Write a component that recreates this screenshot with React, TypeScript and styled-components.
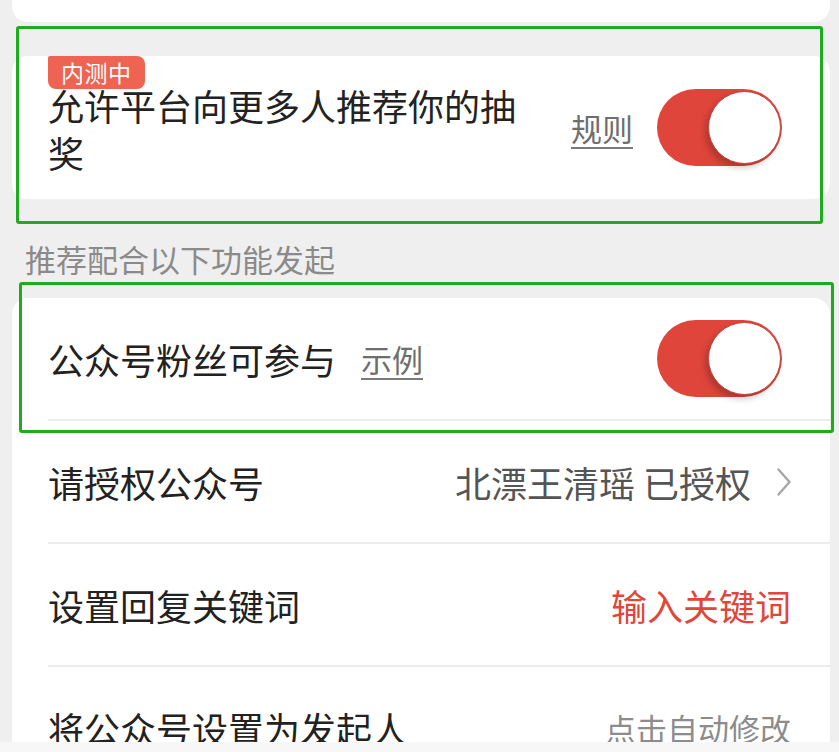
import React from "react";
import styled, { createGlobalStyle } from "styled-components";

const GlobalStyle = createGlobalStyle`
  html, body {
    margin: 0;
    padding: 0;
    background: #efefef;
    overflow: hidden;
  }
  body {
    font-family: "Noto Sans CJK SC", "Noto Sans", sans-serif;
  }
`;

type Row = {
  label: string;
  value?: string;
  tone?: "normal" | "accent" | "muted";
  arrow?: boolean;
};

const rows: Row[] = [
  { label: "请授权公众号", value: "北漂王清瑶 已授权", tone: "normal", arrow: true },
  { label: "设置回复关键词", value: "输入关键词", tone: "accent" },
  { label: "将公众号设置为发起人", value: "点击自动修改", tone: "muted" },
];

export default function App() {
  return (
    <>
      <GlobalStyle />
      <Page>
        <TopCard />
        <Card>
          <Badge>内测中</Badge>
          <RecommendRow>
            <Title>允许平台向更多人推荐你的抽奖</Title>
            <RightGroup>
              <LinkText>规则</LinkText>
              <Toggle on />
            </RightGroup>
          </RecommendRow>
        </Card>
        <SectionLabel>推荐配合以下功能发起</SectionLabel>
        <ListCard>
          <ListRow>
            <LeftGroup>
              <RowLabel>公众号粉丝可参与</RowLabel>
              <LinkText>示例</LinkText>
            </LeftGroup>
            <Toggle on />
          </ListRow>
          {rows.map((r) => (
            <ListRow key={r.label}>
              <RowLabel>{r.label}</RowLabel>
              <ValueGroup>
                <Value $tone={r.tone}>{r.value}</Value>
                {r.arrow && (
                  <svg width="14" height="28" viewBox="0 0 14 28">
                    <path d="M1.5 1.5 L12.5 14 L1.5 26.5" fill="none" stroke="#a6a6a6" strokeWidth="2.4" strokeLinecap="round" strokeLinejoin="round" />
                  </svg>
                )}
              </ValueGroup>
            </ListRow>
          ))}
        </ListCard>
        <Highlight style={{ left: 16, top: 26, width: 807, height: 198 }} />
        <Highlight style={{ left: 19, top: 282, width: 815, height: 151 }} />
      </Page>
      <BottomBar />
    </>
  );
}

function Toggle({ on }: { on?: boolean }) {
  return (
    <Track $on={on}>
      <Knob />
    </Track>
  );
}

const Page = styled.div`
  position: relative;
  height: 752px;
  padding: 0 9px 0 12px;
  box-sizing: border-box;
  overflow: hidden;
`;

const TopCard = styled.div`
  height: 22px;
  background: #ffffff;
  border-radius: 0 0 16px 16px;
  margin-bottom: 34px;
`;

const Card = styled.div`
  position: relative;
  background: #ffffff;
  border-radius: 16px;
  height: 143px;
  padding: 0 48px 0 36px;
  box-sizing: border-box;
  display: flex;
  align-items: center;
`;

const Badge = styled.div`
  position: absolute;
  left: 36px;
  top: 0;
  height: 33px;
  padding: 0 13px;
  background: #ee6352;
  color: #ffffff;
  font-size: 23px;
  line-height: 33px;
  border-radius: 2px 8px 8px 8px;
  letter-spacing: 0.5px;
`;

const RecommendRow = styled.div`
  flex: 1;
  display: flex;
  align-items: center;
  justify-content: space-between;
`;

const Title = styled.div`
  width: 490px;
  font-size: 36px;
  line-height: 47px;
  color: #222222;
  margin-top: 2px;
`;

const RightGroup = styled.div`
  display: flex;
  align-items: center;
  gap: 24px;
`;

const LeftGroup = styled.div`
  display: flex;
  align-items: center;
  gap: 25px;
`;

const LinkText = styled.span`
  font-size: 31px;
  line-height: 40px;
  color: #6e6e6e;
  text-decoration: underline;
  text-decoration-color: #7a7a7a;
  text-underline-offset: 6px;
  text-decoration-thickness: 2px;
`;

const Track = styled.div<{ $on?: boolean }>`
  position: relative;
  width: 125px;
  height: 77px;
  border-radius: 39px;
  background: ${(p) => (p.$on ? "#e0453b" : "#dddddd")};
  display: flex;
  align-items: center;
  justify-content: ${(p) => (p.$on ? "flex-end" : "flex-start")};
  padding: 0 1px;
  box-sizing: border-box;
`;

const Knob = styled.div`
  width: 73px;
  height: 73px;
  border-radius: 50%;
  background: #ffffff;
  box-sizing: border-box;
  border: 1.5px solid #b9463e;
  box-shadow: -3px 4px 6px rgba(0, 0, 0, 0.22);
`;

const SectionLabel = styled.div`
  font-size: 31px;
  line-height: 44px;
  color: #8a8a8a;
  padding: 38px 0 0 13px;
  margin-bottom: 17px;
`;

const ListCard = styled.div`
  background: #ffffff;
  border-radius: 16px 16px 0 0;
`;

const ListRow = styled.div`
  height: 121px;
  margin-left: 36px;
  padding-right: 39px;
  border-bottom: 2px solid #ececec;
  display: flex;
  align-items: center;
  justify-content: space-between;
  &:first-child {
    padding-right: 48px;
  }
`;

const RowLabel = styled.span`
  font-size: 36px;
  line-height: 48px;
  color: #222222;
`;

const ValueGroup = styled.div`
  display: flex;
  align-items: center;
  gap: 26px;
`;

const Value = styled.span<{ $tone?: "normal" | "accent" | "muted" }>`
  font-size: ${(p) => (p.$tone === "muted" ? "31px" : "36px")};
  line-height: 48px;
  color: ${(p) =>
    p.$tone === "accent" ? "#e0463a" : p.$tone === "muted" ? "#8c8c8c" : "#555555"};
`;

const Highlight = styled.div`
  position: absolute;
  box-sizing: border-box;
  border: 3px solid #1fab1f;
  border-radius: 3px;
  pointer-events: none;
`;

const BottomBar = styled.div`
  position: fixed;
  left: 0;
  right: 0;
  bottom: 0;
  height: 10px;
  background: #f7f7f7;
`;
